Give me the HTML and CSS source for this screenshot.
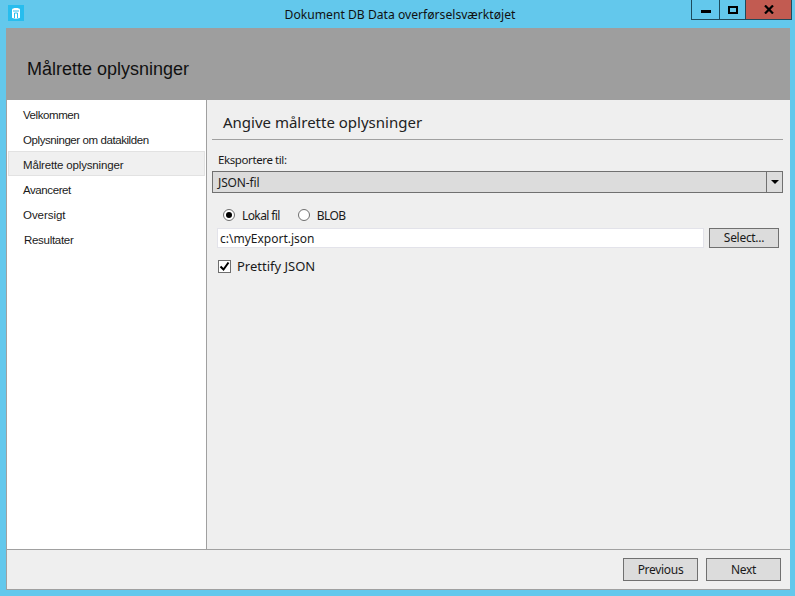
FILE: index.html
```html
<!DOCTYPE html>
<html lang="en">
<head>
<meta charset="utf-8" />
<title>Dokument DB Data overførselsværktøjet</title>
<link rel="stylesheet" href="styles.css">
</head>
<body>
<div class="window">
  <div class="titlebar">
    <div class="app-icon">
      <svg width="16" height="16" viewBox="0 0 16 16">
        <rect width="16" height="16" fill="#27bdee"/>
        <path d="M4 4.500c0-2 8-2 8 0v8c0 1.500-8 1.500-8 0z" fill="#fff"/>
        <path d="M5 6h6M6.500 8v5M9.500 8v5M6.500 8h3" stroke="#27bdee" stroke-width="1" fill="none"/>
      </svg>
    </div>
    <div class="title">Dokument DB Data overførselsværktøjet</div>
    <div class="controls">
      <div class="ctl ctl-min"><span class="min-glyph"></span></div>
      <div class="ctl ctl-max"><span class="max-glyph"></span></div>
      <div class="ctl ctl-close">
        <svg width="10" height="9" viewBox="0 0 10 9"><path d="M1 .5l8 8M9 .5l-8 8" stroke="#000" stroke-width="2.200" fill="none"/></svg>
      </div>
    </div>
  </div>

  <div class="frame">
    <div class="banner"><h1>Målrette oplysninger</h1></div>
    <div class="main">
      <ul class="nav">
        <li>Velkommen</li>
        <li>Oplysninger om datakilden</li>
        <li class="selected">Målrette oplysninger</li>
        <li>Avanceret</li>
        <li class="wider">Oversigt</li>
        <li class="nudge">Resultater</li>
      </ul>
      <div class="panel">
        <h2>Angive målrette oplysninger</h2>
        <div class="field-label">Eksportere til:</div>
        <div class="select">
          <span class="select-value">JSON-fil</span>
          <span class="select-arrow"></span>
        </div>
        <div class="radios">
          <span class="radio on"></span><span class="radio-text">Lokal fil</span>
          <span class="radio"></span><span class="radio-text">BLOB</span>
        </div>
        <div class="file-row">
          <div class="input">c:\myExport.json</div>
          <div class="btn btn-select">Select...</div>
        </div>
        <div class="check-row">
          <span class="check">
            <svg width="11" height="11" viewBox="0 0 11 11"><path d="M1.500 5.500l3 3 5-7" stroke="#000" stroke-width="2" fill="none"/></svg>
          </span>
          <span>Prettify JSON</span>
        </div>
      </div>
    </div>
    <div class="footer">
      <div class="btn btn-wide">Previous</div>
      <div class="btn btn-wide">Next</div>
    </div>
  </div>
</div>
</body>
</html>
```

FILE: styles.css
```css
html {font-family: "Noto Sans", "Open Sans", sans-serif;}
body {margin: 0; padding: 0; font-size: 12px; color: #1a1a1a;}
ul {margin: 0; padding: 0; list-style: none;}
h1, h2 {margin: 0; font-weight: normal;}

.window {width: 795px; height: 596px; background: #63c8ec; display: flex; flex-direction: column; overflow: hidden;}

/* title bar */
.titlebar {height: 28px; flex: none; display: grid; grid-template-columns: 1fr auto 1fr; padding: 0 3px 0 8px;}
.app-icon {padding-top: 5px;}
.title {line-height: 30px; font-size: 12.150px; color: #111;}
.controls {display: flex; justify-content: flex-end; height: 20px;}
.ctl {height: 19px; border: 1px solid #1d4a5c; border-top: 0; display: flex; align-items: center; justify-content: center;}
.ctl-min {width: 27px;}
.ctl-max {width: 25px; border-left: 0;}
.ctl-close {width: 45px; border-left: 0; background: #c25b51;}
.min-glyph {width: 10px; height: 3px; background: #000; margin-top: 3px;}
.max-glyph {width: 6px; height: 4px; border: 2px solid #000;}

.frame {flex: 1; margin: 0 5px 6px 6px; display: flex; flex-direction: column; background: #efefef; border-bottom: 1px solid #a0a0a0; border-left: 1px solid #a0a0a0;}

.banner {height: 72px; flex: none; margin-left: -1px; background: #9e9e9e; display: flex; align-items: center; padding-left: 21px;}
.banner h1 {font-family: "Liberation Sans", sans-serif; font-size: 18px; color: #111; padding-top: 10px;}

.main {flex: 1; display: flex; min-height: 0;}

/* left nav */
.nav {width: 199px; flex: none; background: #fff; border-right: 1px solid #a0a0a0; padding-top: 1px; font-family: "Liberation Sans", sans-serif;}
.nav li {height: 25px; line-height: 28px; padding-left: 16px; font-size: 11.500px; letter-spacing: -.42px;}
.nav .nudge {padding-left: 17px; letter-spacing: -.3px;}
.nav .wider {letter-spacing: -.05px;}
.nav .selected {margin-left: 1px; padding-left: 14px; background: #f0f0f0; box-sizing: border-box; border: 1px solid #e2e2e2; line-height: 26px; width: 197px; letter-spacing: -.16px;}

/* right panel */
.panel {flex: 1; padding: 0 7px 0 5px; min-width: 0;}
.panel h2 {font-size: 15px; line-height: 42px; height: 39px; padding-left: 11px; border-bottom: 1px solid #a0a0a0; box-sizing: border-box; margin-top: 1px; color: #222;}
.field-label {font-size: 11.500px; padding-left: 6px; margin-top: 12px; line-height: 16px; letter-spacing: -.4px;}
.select {height: 22px; margin-top: 3px; display: flex; background: #dcdcdc; border: 1px solid #707070; box-sizing: border-box;}
.select-value {flex: 1; padding-left: 5px; line-height: 22px; font-size: 12px; letter-spacing: -.15px;}
.select-arrow {width: 15px; border-left: 1px solid #707070; position: relative;}
.select-arrow::after {content: ""; position: absolute; left: 4px; top: 8px; border: 4px solid transparent; border-top: 4px solid #000; border-bottom: 0;}

.radios {display: flex; align-items: center; height: 20px; margin-top: 12px; padding-left: 11px; font-size: 12px; letter-spacing: -.6px;}
.radio {width: 12px; height: 12px; border: 1px solid #6e6e6e; border-radius: 50%; background: #fff; box-sizing: border-box; flex: none; position: relative;}
.radio.on::after {content: ""; position: absolute; left: 2px; top: 2px; width: 6px; height: 6px; border-radius: 50%; background: #000;}
.radio-text {margin-left: 7px; margin-right: 18px;}

.file-row {display: flex; gap: 5px; padding-left: 5px; padding-right: 4px; margin-top: 3px;}
.input {flex: 1; height: 20px; line-height: 19px; box-sizing: border-box; background: #fff; border: 1px solid #e3e3ea; padding-left: 2px; font-size: 12px;}
.btn {background: #dcdcdc; border: 1px solid #707070; box-sizing: border-box; text-align: center; font-size: 12px;}
.btn-select {width: 70px; height: 20px; line-height: 18px; letter-spacing: -.3px;}

.check-row {display: flex; align-items: center; gap: 6px; padding-left: 6px; margin-top: 10px; font-size: 13px; line-height: 16px;}
.check {width: 13px; height: 13px; box-sizing: border-box; border: 1px solid #6e6e6e; background: #fff; display: flex; align-items: center; justify-content: center;}

/* footer */
.footer {height: 40px; flex: none; box-sizing: border-box; border-top: 1px solid #a0a0a0; display: flex; justify-content: flex-end; gap: 8px; padding: 8px 9px 0 0;}
.btn-wide {width: 75px; height: 23px; line-height: 22px; letter-spacing: -.3px;}
```
